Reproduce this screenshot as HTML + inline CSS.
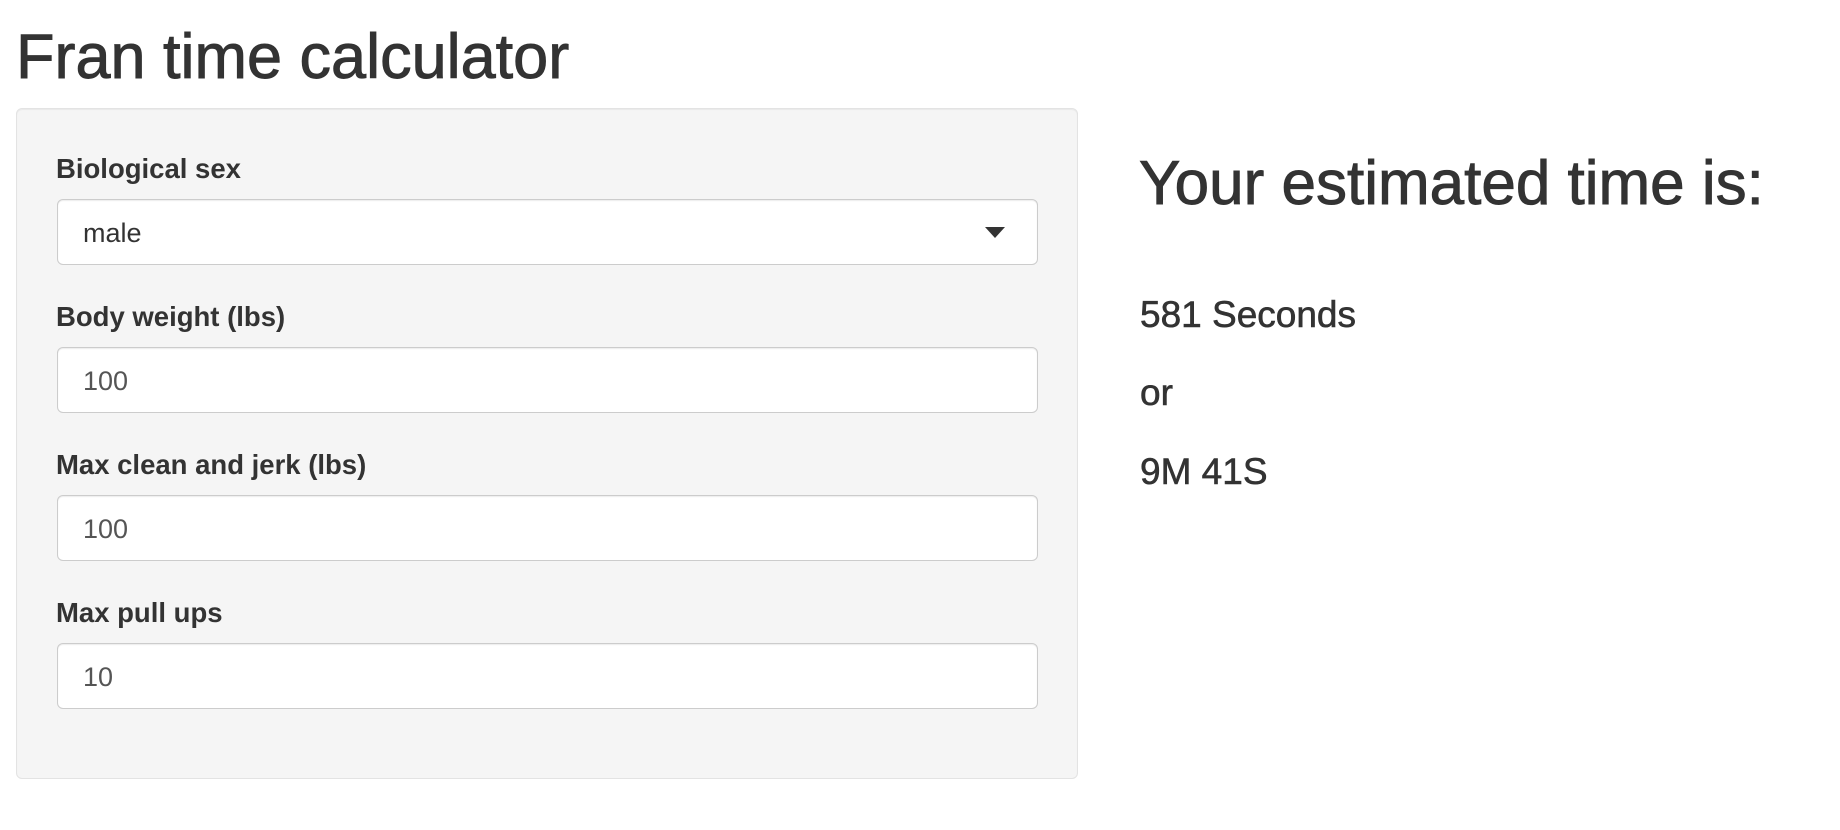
<!DOCTYPE html>
<html><head><meta charset="utf-8"><style>
body{margin:0;width:1840px;height:830px;background:#fff;font-family:"Liberation Sans",Arial,sans-serif;color:#333;position:relative;overflow:hidden}
.a{position:absolute;line-height:1;white-space:nowrap}
.h{-webkit-text-stroke:0.9px #333}
.t{-webkit-text-stroke:0.6px #333}
.panel{position:absolute;left:16px;top:108px;width:1060px;height:669px;background:#f5f5f5;border:1px solid #e3e3e3;border-radius:6px;box-shadow:inset 0 1px 1px rgba(0,0,0,.05)}
.lbl{font-weight:bold;font-size:27.5px}
.inp{position:absolute;left:57px;width:979px;height:64px;background:#fff;border:1px solid #ccc;border-radius:6px;box-shadow:inset 0 1px 1px rgba(0,0,0,.075)}
.inp span{position:absolute;left:25px;top:20px;font-size:27px;line-height:1;color:#555}
</style></head><body>
<div class="a h" style="left:16px;top:26px;font-size:63px">Fran time calculator</div>
<div class="panel"></div>
<div class="a lbl" style="left:56px;top:155px">Biological sex</div>
<div class="inp" style="top:199px"><span style="color:#333">male</span>
<svg style="position:absolute;left:927px;top:27px" width="20" height="11"><path d="M0 0H20L10 11Z" fill="#333"/></svg></div>
<div class="a lbl" style="left:56px;top:303px">Body weight (lbs)</div>
<div class="inp" style="top:347px"><span>100</span></div>
<div class="a lbl" style="left:56px;top:451px">Max clean and jerk (lbs)</div>
<div class="inp" style="top:495px"><span>100</span></div>
<div class="a lbl" style="left:56px;top:599px">Max pull ups</div>
<div class="inp" style="top:643px"><span>10</span></div>
<div class="a h" style="left:1139px;top:153px;font-size:62px">Your estimated time is:</div>
<div class="a t" style="left:1140px;top:296px;font-size:37px">581 Seconds</div>
<div class="a t" style="left:1140px;top:374px;font-size:37px">or</div>
<div class="a t" style="left:1140px;top:453px;font-size:37px">9M 41S</div>
</body></html>
